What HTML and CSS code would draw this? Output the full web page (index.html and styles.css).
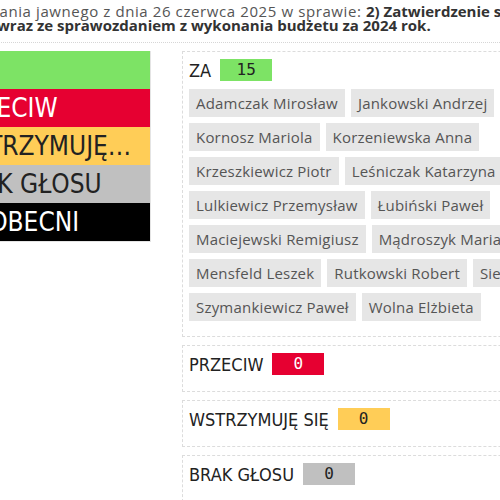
FILE: index.html
```
<!DOCTYPE html>
<html lang="pl">
<head>
	<meta charset="utf-8">
	<title>Wyniki głosowania</title>
	<link rel="stylesheet" href="styles.css">
</head>
<body>
	<div class="page">
		<h1 class="title">
			<span class="line line-first">Wyniki głosowania jawnego z dnia 26 czerwca 2025 w sprawie: <b>2) Zatwierdzenie sprawozdania finansowego</b></span>
			<span class="line"><b>wraz ze sprawozdaniem z wykonania budżetu za 2024 rok.</b></span>
		</h1>

		<div class="results">
			<ul class="summary">
				<li class="bar bar-za">ZA</li>
				<li class="bar bar-przeciw">PRZECIW</li>
				<li class="bar bar-wstrz">WSTRZYMUJĘ SIĘ</li>
				<li class="bar bar-brak">BRAK GŁOSU</li>
				<li class="bar bar-nieob">NIEOBECNI</li>
			</ul>

			<div class="details">
				<div class="vote-box">
					<div class="vote-head">
						<span class="vote-label">ZA</span>
						<span class="count count-za">15</span>
					</div>
					<ul class="names">
						<li>Adamczak Mirosław</li>
						<li>Jankowski Andrzej</li>
						<li>Kornosz Mariola</li>
						<li>Korzeniewska Anna</li>
						<li>Krzeszkiewicz Piotr</li>
						<li>Leśniczak Katarzyna</li>
						<li>Lulkiewicz Przemysław</li>
						<li>Łubiński Paweł</li>
						<li>Maciejewski Remigiusz</li>
						<li>Mądroszyk Marian</li>
						<li>Mensfeld Leszek</li>
						<li>Rutkowski Robert</li>
						<li>Siewert Jan</li>
						<li>Szymankiewicz Paweł</li>
						<li>Wolna Elżbieta</li>
					</ul>
				</div>

				<div class="vote-box">
					<div class="vote-head">
						<span class="vote-label">PRZECIW</span>
						<span class="count count-przeciw">0</span>
					</div>
				</div>

				<div class="vote-box">
					<div class="vote-head">
						<span class="vote-label">WSTRZYMUJĘ SIĘ</span>
						<span class="count count-wstrz">0</span>
					</div>
				</div>

				<div class="vote-box">
					<div class="vote-head">
						<span class="vote-label">BRAK GŁOSU</span>
						<span class="count count-brak">0</span>
					</div>
				</div>
			</div>
		</div>
	</div>
</body>
</html>
```

FILE: styles.css
```
*{
	margin: 0;
	padding: 0;
}
ul{
	list-style: none;
}
body{
	overflow: hidden;
	font-family: "Open Sans", "Liberation Sans", sans-serif;
	color: #555;
	background: #fff;
}
.page{
	margin-left: -48px;
	width: 720px;
}

/* naglowek */
.title{
	padding: 4px 0 10px 45px;
	font-size: 15px;
	font-weight: normal;
	line-height: 14px;
	border-bottom: 1px dotted #d6d6d6;
}
.title .line{
	display: block;
	white-space: nowrap;
}
.title .line-first{
	letter-spacing: 0.6px;
	text-indent: -104px;
}
.title b{
	color: #333;
	font-weight: bold;
	letter-spacing: 0;
}

.results{
	display: flex;
	align-items: flex-start;
	gap: 31px;
	padding-top: 8px;
}

/* paski po lewej */
.summary{
	width: 198px;
	flex-shrink: 0;
	border-right: 1px solid #e4e4e4;
	border-bottom: 1px solid #e4e4e4;
}
.bar{
	height: 38px;
	line-height: 38px;
	padding: 0 15px 0 6px;
	text-indent: -8px;
	font-family: "DejaVu Sans Condensed", sans-serif;
	font-size: 26px;
	color: #fff;
	white-space: nowrap;
	overflow: hidden;
	text-overflow: ellipsis;
}
.bar-za{
	background: #7de365;
	color: #7de365;
}
.bar-przeciw{
	background: #e60031;
}
.bar-wstrz{
	background: #ffcd57;
	color: #222;
}
.bar-brak{
	background: #c0c0c0;
	color: #222;
}
.bar-nieob{
	background: #000;
}

/* boksy z nazwiskami */
.details{
	width: 430px;
	flex-shrink: 0;
}
.vote-box{
	border: 1px dashed #dcdcdc;
	padding: 7px 6px 8px;
	margin-bottom: 8px;
}
.vote-head{
	display: flex;
	align-items: center;
	gap: 9px;
	height: 22px;
	margin-bottom: 8px;
}
.vote-label{
	font-family: "DejaVu Sans Condensed", sans-serif;
	font-size: 18px;
	color: #222;
}
.count{
	width: 52px;
	height: 22px;
	line-height: 22px;
	text-align: center;
	font-family: "DejaVu Sans Mono", monospace;
	font-size: 16px;
	color: #222;
}
.count-za{
	background: #7de365;
}
.count-przeciw{
	background: #e60031;
	color: #fff;
}
.count-wstrz{
	background: #ffcd57;
}
.count-brak{
	background: #c0c0c0;
}

.names{
	display: flex;
	flex-wrap: wrap;
	gap: 6px;
	margin-bottom: 7px;
}
.names li{
	height: 28px;
	line-height: 28px;
	padding: 0 7px;
	background: #e6e6e6;
	color: #555;
	font-size: 15px;
	letter-spacing: 0.2px;
	white-space: nowrap;
}
```
